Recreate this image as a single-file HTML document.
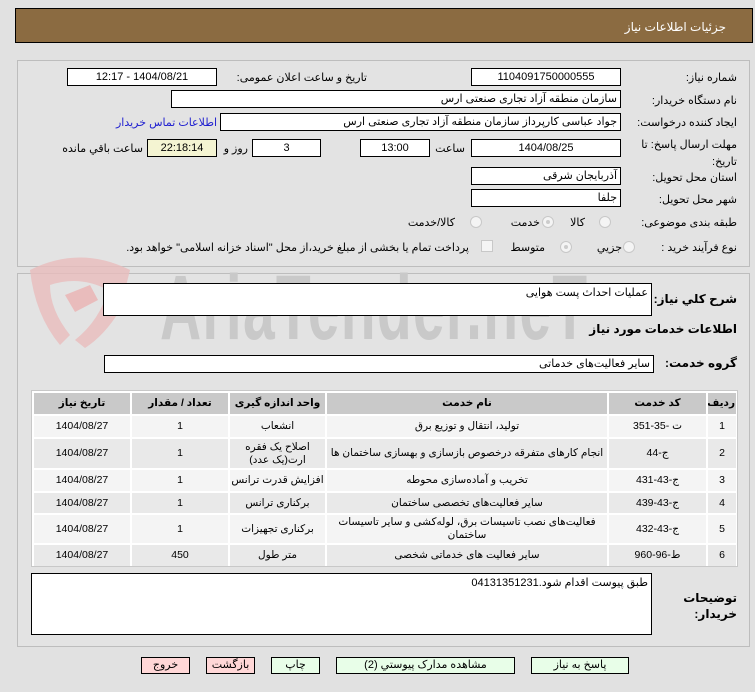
<!DOCTYPE html>
<html><head><meta charset="utf-8">
<style>
body{margin:0;width:755px;height:692px;background:#e1e1e1;font-family:"Liberation Sans","DejaVu Sans",sans-serif;font-size:11px;color:#000;position:relative;overflow:hidden}
.a{position:absolute;white-space:nowrap}
.box{position:absolute;background:#fff;border:1px solid #000;box-sizing:border-box;height:18px;line-height:16px;padding:0 3px;direction:rtl;white-space:nowrap;overflow:hidden}
.c{text-align:center}
.lbl{position:absolute;direction:rtl;white-space:nowrap;text-align:right}
.rad{position:absolute;width:12px;height:12px;border-radius:50%;border:1px solid #c8c8c8;background:#f4f4f4;box-sizing:border-box}
.rad.on::after{content:"";position:absolute;left:3px;top:3px;width:4px;height:4px;border-radius:50%;background:#ccc}
.b{font-weight:bold;font-size:12px}
table{border-collapse:separate;border-spacing:2px;position:absolute;left:32px;top:391px;width:706px;font-size:10.5px;table-layout:fixed}
td,th{text-align:center;direction:rtl;padding:0 1px;line-height:13px;overflow:hidden}
th{background:#c9c9c9;height:21px;font-weight:bold}
tr.o td{background:#f4f4f4}
tr.e td{background:#e9e9e9}
.btn{position:absolute;top:657px;height:17px;border:1px solid #000;box-sizing:border-box;text-align:center;line-height:15px;direction:rtl;background:#e8fee8}
.btn.red{background:#ffd7d7}
</style></head><body>
<div class="a" style="left:15px;top:8px;width:738px;height:35px;background:#8b6b41;border:1px solid #000;box-sizing:border-box"></div>
<div class="lbl" style="right:29px;top:20px;color:#fff;font-size:12px">جزئیات اطلاعات نیاز</div>

<div class="a" style="left:17px;top:60px;width:733px;height:207px;border:1px solid #bdbdbd;background:#e3e3e3;box-sizing:border-box"></div>
<div class="lbl" style="right:18px;top:71px">شماره نیاز:</div>
<div class="box c" style="left:471px;top:68px;width:150px">1104091750000555</div>
<div class="lbl" style="right:388px;top:71px">تاریخ و ساعت اعلان عمومی:</div>
<div class="box c" style="left:67px;top:68px;width:150px">1404/08/21 - 12:17</div>

<div class="lbl" style="right:18px;top:94px">نام دستگاه خریدار:</div>
<div class="box" style="left:171px;top:90px;width:450px">سازمان منطقه آزاد تجاری صنعتی ارس</div>

<div class="lbl" style="right:18px;top:116px">ایجاد کننده درخواست:</div>
<div class="box" style="left:220px;top:113px;width:401px">جواد عباسی کارپرداز سازمان منطقه آزاد تجاری صنعتی ارس</div>
<div class="lbl" style="right:538px;top:116px;color:#2020d0">اطلاعات تماس خریدار</div>

<div class="lbl" style="right:18px;top:137px;line-height:17px">مهلت ارسال پاسخ: تا<br>تاریخ:</div>
<div class="box c" style="left:471px;top:139px;width:150px">1404/08/25</div>
<div class="lbl" style="right:290px;top:142px">ساعت</div>
<div class="box c" style="left:360px;top:139px;width:70px">13:00</div>
<div class="box c" style="left:252px;top:139px;width:69px">3</div>
<div class="lbl" style="right:507px;top:142px">روز و</div>
<div class="box c" style="left:147px;top:139px;width:70px;background:#f4f4d2">22:18:14</div>
<div class="lbl" style="right:612px;top:142px">ساعت باقي مانده</div>

<div class="lbl" style="right:18px;top:171px">استان محل تحویل:</div>
<div class="box" style="left:471px;top:167px;width:150px">آذربایجان شرقی</div>
<div class="lbl" style="right:18px;top:193px">شهر محل تحویل:</div>
<div class="box" style="left:471px;top:189px;width:150px">جلفا</div>

<div class="lbl" style="right:18px;top:216px">طبقه بندی موضوعی:</div>
<div class="rad" style="left:599px;top:216px"></div>
<div class="lbl" style="right:170px;top:216px">کالا</div>
<div class="rad on" style="left:542px;top:216px"></div>
<div class="lbl" style="right:215px;top:216px">خدمت</div>
<div class="rad" style="left:470px;top:216px"></div>
<div class="lbl" style="right:300px;top:216px">کالا/خدمت</div>

<div class="lbl" style="right:18px;top:241px">نوع فرآیند خرید :</div>
<div class="rad" style="left:623px;top:241px"></div>
<div class="lbl" style="right:133px;top:241px">جزیي</div>
<div class="rad on" style="left:560px;top:241px"></div>
<div class="lbl" style="right:210px;top:241px">متوسط</div>
<div class="a" style="left:481px;top:240px;width:12px;height:12px;border:1px solid #c8c8c8;background:#f4f4f4;box-sizing:border-box"></div>
<div class="lbl" style="right:286px;top:241px">پرداخت تمام یا بخشی از مبلغ خرید،از محل "اسناد خزانه اسلامی" خواهد بود.</div>

<div class="a" style="left:17px;top:273px;width:733px;height:374px;border:1px solid #bdbdbd;background:#e3e3e3;box-sizing:border-box"></div>
<svg class="a" style="left:20px;top:250px" width="120" height="100" viewBox="0 0 120 100"><path d="M10 20 Q60 -5 110 20 L100 60 Q85 85 65 98 L55 90 Q80 70 88 40 Q60 25 30 35 Q30 60 50 85 L40 95 Q15 65 10 20Z" fill="#e9bcbc" opacity="0.8"/><path d="M45 45 L70 35 L78 50 L55 62Z" fill="#e9bcbc"/></svg>
<div class="a" style="left:160px;top:262px;font-size:92px;line-height:92px;font-weight:bold;color:#c9c9c9;transform:scaleX(0.62);transform-origin:left top;letter-spacing:2px">AriaTender.neT</div>

<div class="lbl b" style="right:18px;top:292px">شرح کلي نياز:</div>
<div class="box" style="left:103px;top:283px;width:549px;height:33px;background:#fff;padding-top:1px">عملیات احداث پست هوایی</div>
<div class="lbl b" style="right:18px;top:322px">اطلاعات خدمات مورد نیاز</div>
<div class="lbl b" style="right:18px;top:356px">گروه خدمت:</div>
<div class="box" style="left:104px;top:355px;width:550px">سایر فعالیت‌های خدماتی</div>

<div class="a" style="left:31px;top:390px;width:707px;height:177px;border:1px solid #c8c8c8;box-sizing:border-box;background:#fff"></div>
<table>
<colgroup><col style="width:96px"><col style="width:96px"><col style="width:95px"><col style="width:280px"><col style="width:97px"><col style="width:28px"></colgroup>
<tr><th>تاریخ نیاز</th><th>تعداد / مقدار</th><th>واحد اندازه گیری</th><th>نام خدمت</th><th>کد خدمت</th><th>ردیف</th></tr>
<tr class="o" style="height:21px"><td>1404/08/27</td><td>1</td><td>انشعاب</td><td>تولید، انتقال و توزیع برق</td><td>ت -35-351</td><td>1</td></tr>
<tr class="e" style="height:29px"><td>1404/08/27</td><td>1</td><td>اصلاح یک فقره ارت(یک عدد)</td><td>انجام کارهای متفرقه درخصوص بازسازی و بهسازی ساختمان ها</td><td>ج-44</td><td>2</td></tr>
<tr class="o" style="height:21px"><td>1404/08/27</td><td>1</td><td style="white-space:nowrap">افزایش قدرت ترانس</td><td>تخریب و آماده‌سازی محوطه</td><td>ج-43-431</td><td>3</td></tr>
<tr class="e" style="height:20px"><td>1404/08/27</td><td>1</td><td>برکناری ترانس</td><td>سایر فعالیت‌های تخصصی ساختمان</td><td>ج-43-439</td><td>4</td></tr>
<tr class="o" style="height:28px"><td>1404/08/27</td><td>1</td><td>برکناری تجهیزات</td><td>فعالیت‌های نصب تاسیسات برق، لوله‌کشی و سایر تاسیسات ساختمان</td><td>ج-43-432</td><td>5</td></tr>
<tr class="e" style="height:21px"><td>1404/08/27</td><td>450</td><td>متر طول</td><td>سایر فعالیت های خدماتی شخصی</td><td>ط-96-960</td><td>6</td></tr>
</table>

<div class="lbl b" style="right:18px;top:590px;line-height:16px">توضیحات<br>خریدار:</div>
<div class="box" style="left:31px;top:573px;width:621px;height:62px;padding-top:1px">طبق پیوست اقدام شود.04131351231</div>

<div class="btn" style="left:531px;width:98px">پاسخ به نیاز</div>
<div class="btn" style="left:336px;width:179px">مشاهده مدارک پیوستي (2)</div>
<div class="btn" style="left:271px;width:49px">چاپ</div>
<div class="btn red" style="left:206px;width:49px">بازگشت</div>
<div class="btn red" style="left:141px;width:49px">خروج</div>
</body></html>
